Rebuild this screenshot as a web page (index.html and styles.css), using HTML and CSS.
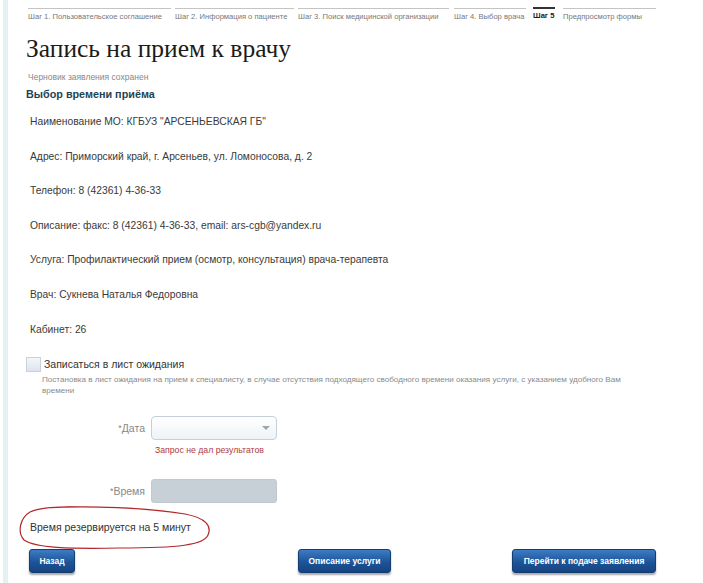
FILE: index.html
```html
<!DOCTYPE html>
<html lang="ru">
<head>
<meta charset="utf-8">
<title>Запись на прием к врачу</title>
<link rel="stylesheet" href="styles.css">
</head>
<body>
<div class="frame">
  <nav class="steps">
    <div class="step s1">Шаг 1. Пользовательское соглашение</div>
    <div class="step s2">Шаг 2. Информация о пациенте</div>
    <div class="step s3">Шаг 3. Поиск медицинской организации</div>
    <div class="step s4">Шаг 4. Выбор врача</div>
    <div class="step s5 current">Шаг 5</div>
    <div class="step s6">Предпросмотр формы</div>
  </nav>

  <h1 class="title">Запись на прием к врачу</h1>
  <div class="draft">Черновик заявления сохранен</div>
  <h2 class="section">Выбор времени приёма</h2>

  <div class="info">
    <p>Наименование МО: КГБУЗ "АРСЕНЬЕВСКАЯ ГБ"</p>
    <p>Адрес: Приморский край, г. Арсеньев, ул. Ломоносова, д. 2</p>
    <p>Телефон: 8 (42361) 4-36-33</p>
    <p>Описание: факс: 8 (42361) 4-36-33, email: ars-cgb@yandex.ru</p>
    <p>Услуга: Профилактический прием (осмотр, консультация) врача-терапевта</p>
    <p>Врач: Сукнева Наталья Федоровна</p>
    <p>Кабинет: 26</p>
  </div>

  <div class="wait">
    <label class="check"><span class="box"></span><span class="check-label">Записаться в лист ожидания</span></label>
    <div class="hint">Постановка в лист ожидания на прием к специалисту, в случае отсутствия подходящего свободного времени оказания услуги, с указанием удобного Вам<br>времени</div>
  </div>

  <div class="form">
    <div class="row">
      <div class="lbl"><span class="req">*</span>Дата</div>
      <div class="field">
        <div class="select"><span class="arrow"></span></div>
        <div class="error">Запрос не дал результатов</div>
      </div>
    </div>
    <div class="row row-time">
      <div class="lbl"><span class="req">*</span>Время</div>
      <div class="field">
        <div class="input disabled"></div>
      </div>
    </div>
  </div>

  <div class="reserve">
    <span>Время резервируется на 5 минут</span>
    <svg class="mark" width="200" height="50" viewBox="0 0 200 50">
      <path d="M 27 3 C 70 0, 130 3, 167 9 C 188 13, 194 21, 190 30 C 186 40, 160 43, 102 43 C 52 44, 17 43, 6 35 C -1 27, 2 13, 12 7 C 20 3, 42 1, 62 2" fill="none" stroke="#b3262a" stroke-width="1.2"/>
    </svg>
  </div>

  <div class="actions">
    <button class="btn b-back">Назад</button>
    <button class="btn b-desc">Описание услуги</button>
    <button class="btn b-next">Перейти к подаче заявления</button>
  </div>
</div>
</body>
</html>
```

FILE: styles.css
```css
html, body {
  margin: 0;
  padding: 0;
  background: #fff;
}
body {
  font-family: "Liberation Sans", Arial, sans-serif;
  color: #333;
}
.frame {
  margin-left: 3px;
  border-left: 5px solid #e3f1f3;
  padding: 8px 0 0 20px;
  min-height: 575px;
}

/* steps */
.steps {
  display: flex;
  gap: 4px;
}
.step {
  flex: none;
  border-top: 1px solid #c4c4c4;
  padding-top: 3px;
  font-size: 7.6px;
  line-height: 10px;
  color: #777;
  white-space: nowrap;
}
.s1 { width: 143px; }
.s2 { width: 119px; }
.s3 { width: 151px; }
.s4 { width: 72px; margin-left: 1px; }
.s5 { width: 22px; margin-left: 3px; }
.s6 { width: 93px; margin-left: 4px; }
.step.current {
  border-top: 2px solid #333;
  padding-top: 2px;
  margin-top: -1px;
  color: #222;
  font-weight: bold;
}

.title {
  margin: 13px 0 0 -2px;
  font-family: "Liberation Serif", "Times New Roman", serif;
  font-weight: normal;
  font-size: 25.5px;
  line-height: 28px;
  color: #1b1b1b;
}
.draft {
  margin-top: 8px;
  font-size: 8.5px;
  line-height: 12px;
  color: #888;
}
.section {
  margin: 4px 0 0 -2px;
  font-size: 10.8px;
  line-height: 14px;
  font-weight: bold;
  color: #1f4353;
}

.info {
  margin-top: 14px;
  padding-left: 2px;
}
.info p {
  margin: 0 0 20.6px;
  font-size: 10.3px;
  line-height: 14px;
  color: #3a3a3a;
}

.check {
  display: flex;
  align-items: center;
  margin-left: -2px;
  height: 14px;
}
.box {
  width: 13px;
  height: 13px;
  border: 1px solid #c9d1dc;
  background: linear-gradient(#f4f6fb, #dde3ee);
  margin-right: 3px;
}
.check-label {
  font-size: 10.5px;
  color: #333;
}
.hint {
  margin: 3px 0 0 14px;
  font-size: 8.1px;
  line-height: 11px;
  color: #8a8a8a;
}

.form {
  margin-top: 20px;
}
.row {
  display: grid;
  grid-template-columns: 117px 126px;
  column-gap: 6px;
  align-items: start;
}
.lbl {
  text-align: right;
  font-size: 10.5px;
  line-height: 24px;
  color: #888;
}
.req {
  color: #888;
  font-size: 9px;
  vertical-align: 1px;
}
.select {
  position: relative;
  height: 22px;
  border: 1px solid #c7d0d8;
  border-radius: 4px;
  background: linear-gradient(#ffffff, #eef3f7);
}
.arrow {
  position: absolute;
  right: 6px;
  top: 9px;
  width: 0;
  height: 0;
  border-left: 4px solid transparent;
  border-right: 4px solid transparent;
  border-top: 4px solid #9aa;
}
.error {
  margin: 4px 0 0 4px;
  font-size: 8.7px;
  line-height: 12px;
  color: #b03a3a;
}
.row-time {
  margin-top: 23px;
}
.input.disabled {
  height: 22px;
  border: 1px solid #bfc9d0;
  border-radius: 3px;
  background: #c6d0d6;
}

.reserve {
  position: relative;
  margin-top: 17px;
  padding-left: 2px;
  font-size: 10.5px;
  line-height: 14px;
  color: #333;
}
.mark {
  position: absolute;
  left: -10px;
  top: -15px;
  pointer-events: none;
}

.actions {
  display: flex;
  margin-top: 15px;
}
.btn {
  flex: none;
  height: 24px;
  padding: 0;
  border: 1px solid #123e74;
  border-radius: 3px;
  background: linear-gradient(#3d7cc4, #1d5499 55%, #16437f);
  box-shadow: 0 2px 2px rgba(0,0,0,0.35);
  color: #fff;
  font-family: "Liberation Sans", Arial, sans-serif;
  font-size: 8.5px;
  font-weight: bold;
}
.b-back { width: 46px; margin-left: 1px; }
.b-desc { width: 93px; margin-left: 223px; }
.b-next { width: 144px; margin-left: 121px; }
```
